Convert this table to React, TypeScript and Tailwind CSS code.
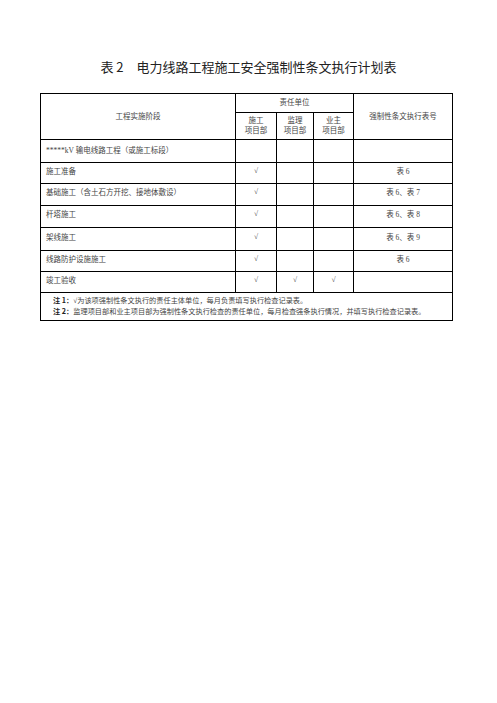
import React from 'react';

const font = { fontFamily: '"Liberation Serif", "Noto Sans CJK SC", serif' };

type Row = { stage: string; units: [boolean, boolean, boolean]; ref: string; h: string };

const rows: Row[] = [
  { stage: '施工准备', units: [true, false, false], ref: '表 6', h: 'h-[21px]' },
  { stage: '基础施工（含土石方开挖、接地体敷设）', units: [true, false, false], ref: '表 6、表 7', h: 'h-[22px]' },
  { stage: '杆塔施工', units: [true, false, false], ref: '表 6、表 8', h: 'h-[22px]' },
  { stage: '架线施工', units: [true, false, false], ref: '表 6、表 9', h: 'h-[23px]' },
  { stage: '线路防护设施施工', units: [true, false, false], ref: '表 6', h: 'h-[21px]' },
  { stage: '竣工验收', units: [true, true, true], ref: '', h: 'h-[21px]' },
];

const cell = 'border border-black p-0 align-middle';

export default function App() {
  return (
    <div className="min-h-[703px] w-[497px] bg-white text-[#444]" style={font}>
      <div className="pt-[58px] pb-[18px] text-center">
        <h1
          className="text-[13px] leading-[17px] text-[#222]"
          style={{ fontFamily: '"Noto Sans CJK SC", "Liberation Sans", sans-serif' }}
        >
          表 2　电力线路工程施工安全强制性条文执行计划表
        </h1>
      </div>

      <div className="pl-[40px]">
        <table className="w-[412px] table-fixed border-collapse text-[7.5px] leading-[10px]">
          <colgroup>
            <col className="w-[195px]" />
            <col className="w-[41px]" />
            <col className="w-[37px]" />
            <col className="w-[40px]" />
            <col className="w-[99px]" />
          </colgroup>
          <tbody>
            <tr className="h-[19px]">
              <td rowSpan={2} className={`${cell} text-center`}>工程实施阶段</td>
              <td colSpan={3} className={`${cell} text-center`}>责任单位</td>
              <td rowSpan={2} className={`${cell} text-center`}>强制性条文执行表号</td>
            </tr>
            <tr className="h-[27px]">
              <td className={`${cell} text-center`}>施工<br />项目部</td>
              <td className={`${cell} text-center`}>监理<br />项目部</td>
              <td className={`${cell} text-center`}>业主<br />项目部</td>
            </tr>
            <tr className="h-[23px]">
              <td className={`${cell} pl-[5px]`}>*****kV 输电线路工程（或施工标段）</td>
              <td className={cell}></td>
              <td className={cell}></td>
              <td className={cell}></td>
              <td className={cell}></td>
            </tr>
            {rows.map((r) => (
              <tr key={r.stage} className={r.h}>
                <td className={`${cell} pl-[5px] pb-[3px]`}>{r.stage}</td>
                {r.units.map((u, i) => (
                  <td key={i} className={`${cell} pb-[5px] text-center`}>{u ? '√' : ''}</td>
                ))}
                <td className={`${cell} pb-[3px] text-center`}>{r.ref}</td>
              </tr>
            ))}
            <tr className="h-[28px]">
              <td colSpan={5} className={`${cell} pl-[12px] pb-[2px] text-[7.2px]`}>
                <p>
                  <span className="font-bold text-[#222]" style={{ fontFamily: '"Noto Sans CJK SC", sans-serif' }}>注 1：</span>
                  √为该项强制性条文执行的责任主体单位，每月负责填写执行检查记录表。
                </p>
                <p>
                  <span className="font-bold text-[#222]" style={{ fontFamily: '"Noto Sans CJK SC", sans-serif' }}>注 2：</span>
                  监理项目部和业主项目部为强制性条文执行检查的责任单位，每月检查强条执行情况，并填写执行检查记录表。
                </p>
              </td>
            </tr>
          </tbody>
        </table>
      </div>
    </div>
  );
}
